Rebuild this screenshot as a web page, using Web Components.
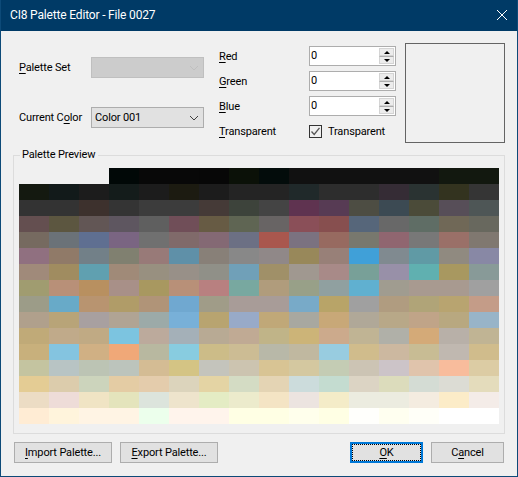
<!DOCTYPE html>
<html>
<head>
<meta charset="utf-8">
<title>CI8 Palette Editor</title>
<style>
  html, body { margin: 0; padding: 0; background: #f0f0f0; }
  body { font: 11px Roboto, "Liberation Sans", sans-serif; color: #000; }
</style>
</head>
<body>
<palette-dialog></palette-dialog>

<script>
const FONT = `Roboto, "Liberation Sans", sans-serif`

class WinTitlebar extends HTMLElement {
  constructor () {
    super()
    this.attachShadow({ mode: 'open' }).innerHTML = `
      <style>
        :host {
          display: flex;
          align-items: center;
          justify-content: space-between;
          height: 31px;
          padding: 0 10px 1px 9px;
          box-sizing: border-box;
          background: #003a66;
          color: #fff;
          font: 12px ${FONT};
          letter-spacing: -0.17px;
        }
        svg { display: block; }
      </style>
      <slot></slot>
      <svg width="10" height="10" viewBox="0 0 10 10">
        <path d="M0 0L10 10M10 0L0 10" stroke="#fff" stroke-width="1" fill="none"/>
      </svg>`
  }
}

class WinCombo extends HTMLElement {
  constructor () {
    super()
    this.attachShadow({ mode: 'open' }).innerHTML = `
      <style>
        :host {
          display: flex;
          align-items: center;
          justify-content: space-between;
          height: 21px;
          padding: 0 4px 0 3px;
          box-sizing: border-box;
          background: #e1e1e1;
          border: 1px solid #adadad;
        }
        :host([disabled]) { background: #cccccc; border-color: #bfbfbf; }
        svg { display: block; stroke: #404040; }
        :host([disabled]) svg { stroke: #bfbfbf; }
      </style>
      <span><slot></slot></span>
      <svg width="10" height="6" viewBox="0 0 10 6">
        <path d="M1 1L5 5L9 1" stroke-width="1" fill="none"/>
      </svg>`
  }
}

class WinSpin extends HTMLElement {
  constructor () {
    super()
    this.attachShadow({ mode: 'open' }).innerHTML = `
      <style>
        :host {
          display: flex;
          justify-content: space-between;
          height: 20px;
          padding: 0 0 0 1px;
          box-sizing: border-box;
          background: #fff;
          border: 1px solid #adadad;
        }
        .text { line-height: 17px; }
        .btns { display: flex; flex-direction: column; width: 16px; padding: 1px 1px 1px 0; box-sizing: border-box; }
        .btn {
          flex: 1;
          display: flex;
          align-items: center;
          justify-content: center;
          background: #ececec;
          border: 1px solid #d4d4d4;
        }
        .btn + .btn { border-top: 1px solid #adadad; }
        svg { display: block; }
      </style>
      <span class="text"><slot></slot></span>
      <div class="btns">
        <div class="btn"><svg width="6" height="3" viewBox="0 0 6 3"><path d="M3 0L6 3H0Z" fill="#000"/></svg></div>
        <div class="btn"><svg width="6" height="3" viewBox="0 0 6 3"><path d="M0 0H6L3 3Z" fill="#000"/></svg></div>
      </div>`
  }
}

class WinCheck extends HTMLElement {
  constructor () {
    super()
    this.attachShadow({ mode: 'open' }).innerHTML = `
      <style>
        :host { display: flex; align-items: center; gap: 6px; height: 20px; white-space: nowrap; }
        .box { width: 13px; height: 13px; box-sizing: border-box; border: 1px solid #333; }
        svg { display: block; }
      </style>
      <div class="box">
        <svg width="11" height="11" viewBox="0 0 11 11"><path d="M1.5 5.5L4.2 8.5L9.5 1.8" stroke="#555" stroke-width="1.3" fill="none"/></svg>
      </div>
      <span><slot></slot></span>`
  }
}

class WinButton extends HTMLElement {
  constructor () {
    super()
    this.attachShadow({ mode: 'open' }).innerHTML = `
      <style>
        :host {
          display: flex;
          align-items: center;
          justify-content: center;
          height: 21px;
          box-sizing: border-box;
          background: #e1e1e1;
          border: 1px solid #adadad;
          position: relative;
          white-space: nowrap;
        }
        :host([default]) { border: 2px solid #0078d7; }
        .focus { display: none; position: absolute; inset: 0; border: 1px dotted #000; }
        :host([default]) .focus { display: block; }
      </style>
      <span><slot></slot></span>
      <div class="focus"></div>`
  }
}

const PALETTE = `
  - - - 010807 080808 080808 070707 0b1108 030c0b 111111 111111 111111 111111 111111 12180f 12180f
  141910 121a1a 1c1c1c 141c1b 1c1c1c 1c1b11 1c1c1c 242424 242424 20292a 2d2d2d 2d2d2d 352c35 2a3332 33331f 353535
  333333 333333 3d312d 343434 3c3c3c 3c3c3c 453a37 3d433b 444444 5f3350 573b54 4d4d43 3c4a53 4b4b39 574e58 4e5656
  644f50 5c5640 625655 5e5660 5f5f5f 704e58 675b44 5f6553 686464 8a4f58 874f4f 56667a 686868 5f6d65 706857 68685e
  766a60 6b7278 5f6f91 7a6582 707070 806a6a 846974 6c7084 a9574e 7b7280 976a60 78786e 906670 787878 9a7068 807870
  907080 907a68 728088 808070 987a78 5f90a8 888078 888888 908888 98885a 988078 40a0d8 808a90 609aa5 908a80 8888a5
  a08a7a a08c60 60a0b0 a08a78 989080 989088 909088 70a0b8 a09068 a09890 a88a88 78a098 9890a8 60b0b0 a89860 889a98
  a09c70 b89078 b89060 a89088 a89860 b89078 b88080 78a8a0 b09c7c 98a088 90a0a0 60b0d0 a09c90 a89a90 a89a90 a0a0a0
  9c9c88 68aac8 b89470 b09c68 b09478 70a8d0 a09c88 a89c98 a89c98 78aac8 b8a468 a0a0a0 b09c80 b0a478 b8a470 c49c88
  b0a08c b8a478 a8a0a0 b0a494 9caaa8 78b0d8 b8a470 98aac8 c0a878 a8a8a0 c8a878 b0a898 b8a888 c0a488 b8a880 98b4c8
  c0aa78 c0aa8a c0aa84 7cc4e0 bcaa9c a4b0b8 b8aa94 c0aa94 c0b488 ccb478 ccaa8c c0b494 b0b0a8 d4aa78 b8b0a8 c0b494
  c8b07c 84c4e0 d0b084 f0a878 b8b8a0 88cce0 ccbc88 ccbc94 b8b8a8 c0b8a0 98cce0 d0bc8c ccb8a0 c8bc94 c0b8b0 d0bc8c
  c4c4a0 b8c4c4 bcc4b4 bcc4bc d4bc94 d4c484 c4c4bc ccc4b0 d8c494 d4c8a0 c4ccb4 ccc4b4 ccc4c8 e0c4ac f8bc9c dccca4
  e4cc94 dcccac ccd4bc e4cca4 e4ccac dcd4bc e4d4a4 d4dcc4 e4d4b4 ccdcdc c4dcd0 dcd4c4 dcdcbc d4dcd4 dcdcd4 e4dcbc
  ecdcc4 eedcd8 f0e4c4 e4e4bc dce4dc eee4cc e4ecc4 ecebcc f4e4c4 ece4e0 f4ecc8 ecece0 ecece0 f4ece0 fcecc8 f4ece8
  ffecd4 fff4dc fff4e4 fff4e4 ecffec fff4ec fff4ec ffffe4 ffffe4 ffffec ffffe4 fffffc fffff0 fffff8 ffffff ffffff
`.trim().split(/\s+/)

class PaletteGrid extends HTMLElement {
  constructor () {
    super()
    const cells = PALETTE.map(c => `<div${c === '-' ? '' : ` style="background:#${c}"`}></div>`).join('')
    this.attachShadow({ mode: 'open' }).innerHTML = `
      <style>
        :host {
          display: grid;
          grid-template-columns: repeat(16, 30px);
          grid-auto-rows: 16px;
        }
      </style>
      ${cells}`
  }
}

class GroupBox extends HTMLElement {
  constructor () {
    super()
    this.attachShadow({ mode: 'open' }).innerHTML = `
      <style>
        :host {
          display: block;
          position: relative;
          box-sizing: border-box;
          border: 1px solid #dcdcdc;
          padding: 12px 5px 9px 5px;
        }
        .legend {
          position: absolute;
          left: 6px;
          top: -9px;
          padding: 0 3px 0 2px;
          background: #f0f0f0;
          line-height: 16px;
        }
      </style>
      <div class="legend"></div>
      <slot></slot>`
    this.shadowRoot.querySelector('.legend').textContent = this.getAttribute('label')
  }
}

class PaletteDialog extends HTMLElement {
  constructor () {
    super()
    this.attachShadow({ mode: 'open' }).innerHTML = `
      <style>
        :host {
          display: block;
          width: 518px;
          height: 477px;
          box-sizing: border-box;
          background: #f0f0f0;
          border: 1px solid #0d4a78;
          border-top: 0;
          font: 11px ${FONT};
          letter-spacing: -0.15px;
          color: #000;
        }
        u { text-decoration-thickness: 1px; text-underline-offset: 2px; }
        span { white-space: nowrap; }
        .top { display: flex; margin-top: 12px; height: 100px; }
        .left {
          display: grid;
          grid-template-columns: 72px 113px;
          grid-auto-rows: 21px;
          row-gap: 29px;
          align-items: center;
          margin: 14px 0 0 18px;
        }
        .mid {
          display: grid;
          grid-template-columns: 90px 87px;
          grid-auto-rows: 20px;
          row-gap: 5px;
          align-items: center;
          margin: 0 0 0 15px;
          padding-top: 3px;
        }
        .swatch {
          width: 100px;
          height: 100px;
          margin-left: 9px;
          box-sizing: border-box;
          border: 1px solid #646464;
        }
        group-box { width: 492px; height: 279px; margin: 12px 0 0 12px; }
        .footer { display: flex; gap: 8px; margin-top: 8px; padding: 0 13px; }
        .footer .wide { width: 98px; }
        .footer .narrow { width: 73px; }
        .footer .push { margin-left: auto; }
      </style>
      <win-titlebar>CI8 Palette Editor - File 0027</win-titlebar>
      <div class="top">
        <div class="left">
          <span><u>P</u>alette Set</span>
          <win-combo disabled></win-combo>
          <span>Current C<u>o</u>lor</span>
          <win-combo>Color 001</win-combo>
        </div>
        <div class="mid">
          <span><u>R</u>ed</span>
          <win-spin>0</win-spin>
          <span><u>G</u>reen</span>
          <win-spin>0</win-spin>
          <span><u>B</u>lue</span>
          <win-spin>0</win-spin>
          <span><u>T</u>ransparent</span>
          <win-check>Transparent</win-check>
        </div>
        <div class="swatch"></div>
      </div>
      <group-box label="Palette Preview"><palette-grid></palette-grid></group-box>
      <div class="footer">
        <win-button class="wide"><span><u>I</u>mport Palette...</span></win-button>
        <win-button class="wide"><span><u>E</u>xport Palette...</span></win-button>
        <win-button class="narrow push" default><span><u>O</u>K</span></win-button>
        <win-button class="narrow"><span>C<u>a</u>ncel</span></win-button>
      </div>`
  }
}

customElements.define('win-titlebar', WinTitlebar)
customElements.define('win-combo', WinCombo)
customElements.define('win-spin', WinSpin)
customElements.define('win-check', WinCheck)
customElements.define('win-button', WinButton)
customElements.define('palette-grid', PaletteGrid)
customElements.define('group-box', GroupBox)
customElements.define('palette-dialog', PaletteDialog)
</script>
</body>
</html>
